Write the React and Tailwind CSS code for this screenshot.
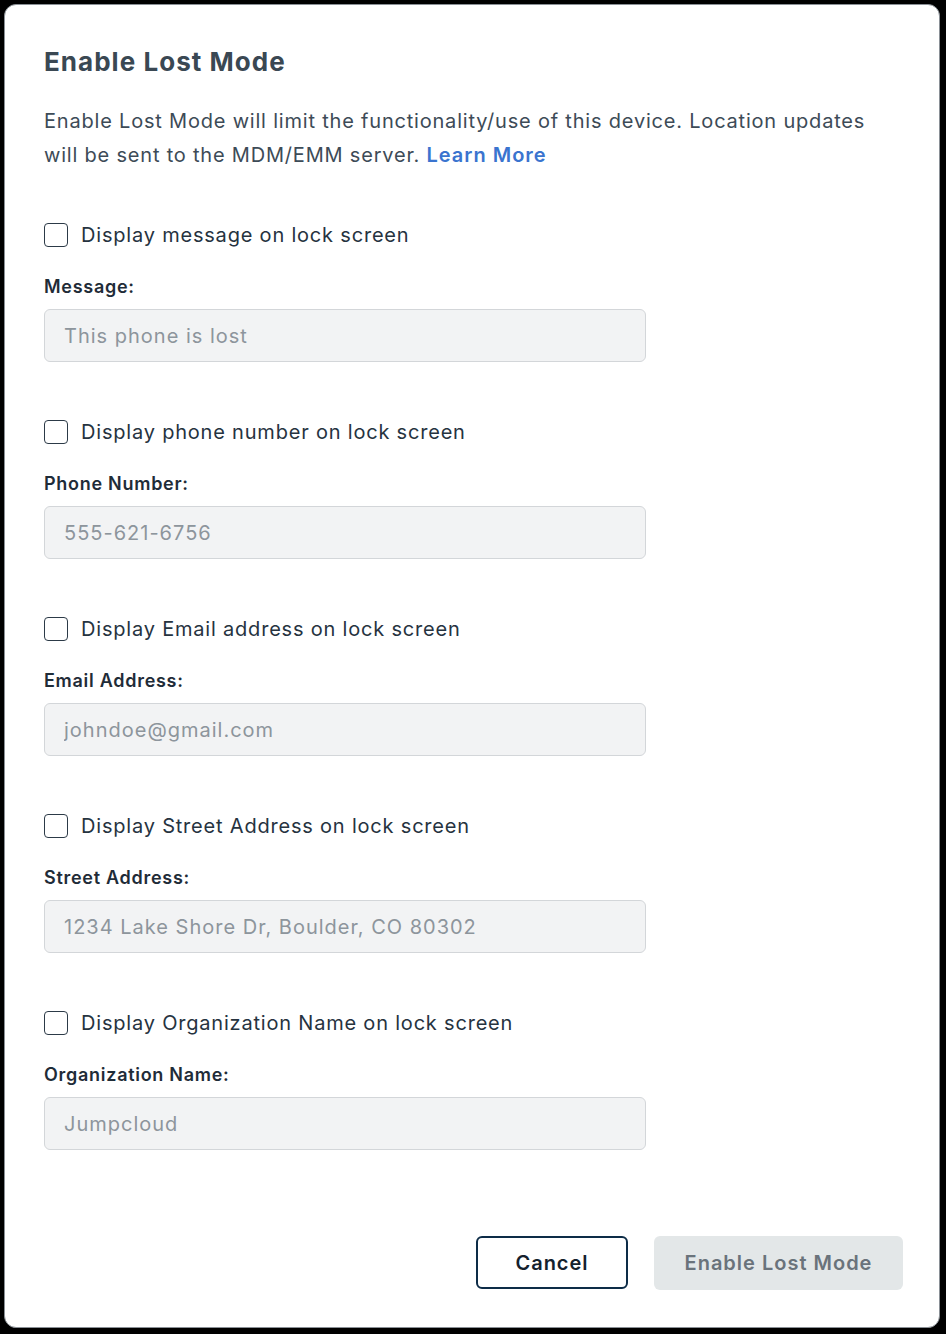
import { useState } from "react";

const fields = [
  { check: "Display message on lock screen", label: "Message:", placeholder: "This phone is lost" },
  { check: "Display phone number on lock screen", label: "Phone Number:", placeholder: "555-621-6756" },
  { check: "Display Email address on lock screen", label: "Email Address:", placeholder: "johndoe@gmail.com" },
  { check: "Display Street Address on lock screen", label: "Street Address:", placeholder: "1234 Lake Shore Dr, Boulder, CO 80302" },
  { check: "Display Organization Name on lock screen", label: "Organization Name:", placeholder: "Jumpcloud" },
];

function Field({ item, checked, onToggle }) {
  return (
    <div className="flex flex-col">
      <label className="flex h-6 items-center gap-[13px] cursor-pointer">
        <span
          onClick={onToggle}
          className={`block h-6 w-6 shrink-0 rounded-[4px] border-[1.5px] border-[#2c3a47] ${checked ? "bg-[#2c3a47]" : "bg-white"}`}
        />
        <span className="text-[20px] leading-6 tracking-[0.04em] text-[#26333f]">{item.check}</span>
      </label>
      <div className="mt-[30px] text-[18px] font-semibold leading-5 tracking-[0.04em] text-[#1f2c38]">
        {item.label}
      </div>
      <input
        type="text"
        disabled
        placeholder={item.placeholder}
        className="mt-3 h-[53px] w-[602px] rounded-[6px] border border-[#d3d6d9] bg-[#f2f3f4] px-[19px] text-[20px] tracking-[0.05em] text-[#8d959c] placeholder:text-[#8d959c] outline-none"
      />
    </div>
  );
}

export default function App() {
  const [checked, setChecked] = useState([false, false, false, false, false]);

  const toggle = (i) => {
    const next = [...checked];
    next[i] = !next[i];
    setChecked(next);
  };

  return (
    <div
      className="h-[1334px] w-[946px] bg-black pt-[4px] pl-[4px] pr-[6px] pb-[6px]"
      style={{ fontFamily: "Inter, 'Noto Sans', sans-serif" }}
    >
      <div className="flex h-full flex-col rounded-[12px] border border-[#8a9096] bg-white pl-[39px] pr-[36px] pt-[41px] pb-[38px]">
        <h1 className="text-[26px] font-bold leading-8 tracking-[0.04em] text-[#3a4853]">Enable Lost Mode</h1>
        <p className="mt-[26px] text-[20px] leading-[34px] tracking-[0.04em] text-[#3d4b57]">
          Enable Lost Mode will limit the functionality/use of this device. Location updates
          <br />
          will be sent to the MDM/EMM server.{" "}
          <a href="#" className="font-semibold tracking-[0.05em] text-[#3a74cf]">
            Learn More
          </a>
        </p>

        <div className="mt-[51px] flex flex-col gap-[58px]">
          {fields.map((item, i) => (
            <Field key={item.label} item={item} checked={checked[i]} onToggle={() => toggle(i)} />
          ))}
        </div>

        <div className="mt-[86px] flex justify-end gap-[26px]">
          <button className="h-[53px] w-[152px] rounded-[6px] border-2 border-[#0d2c47] bg-white text-[20px] font-semibold tracking-[0.05em] text-[#14212d]">
            Cancel
          </button>
          <button
            disabled
            className="h-[54px] w-[249px] rounded-[6px] bg-[#e3e7e8] text-[20px] font-semibold tracking-[0.05em] text-[#6a737b]"
          >
            Enable Lost Mode
          </button>
        </div>
      </div>
    </div>
  );
}
